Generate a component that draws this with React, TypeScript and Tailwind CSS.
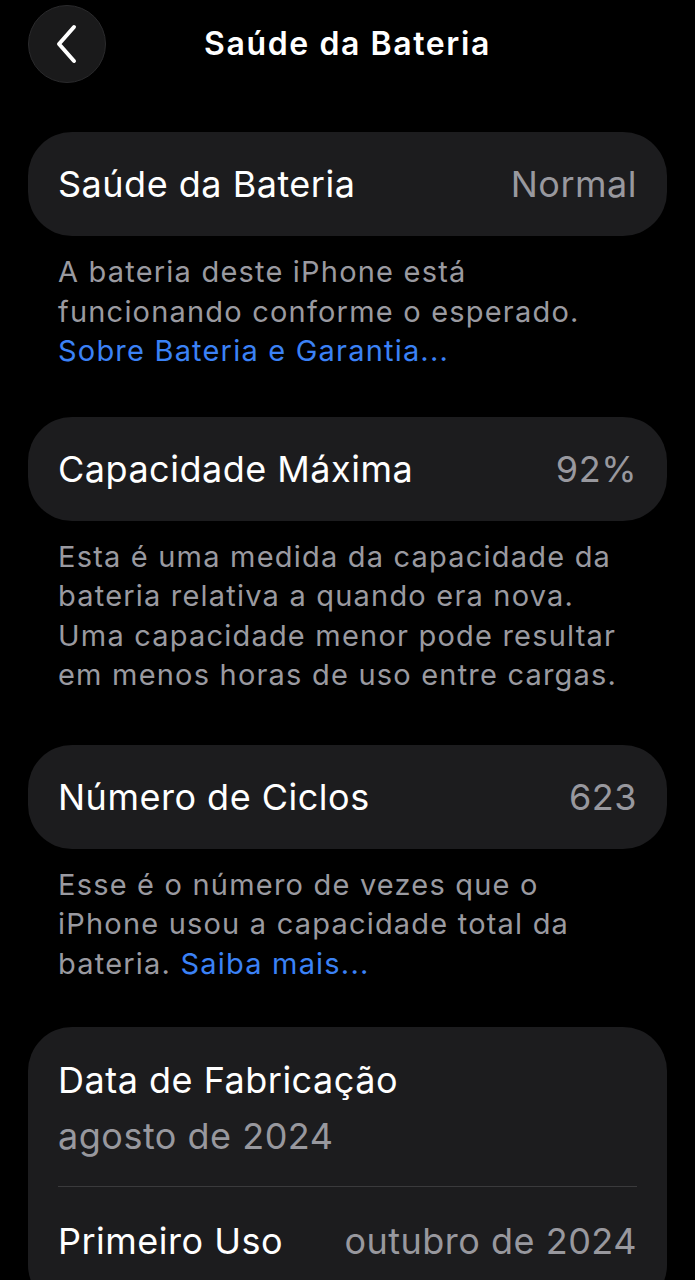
import React from 'react';

const font = { fontFamily: 'Inter, "Liberation Sans", sans-serif' };

const Row: React.FC<{ label: string; value: string }> = ({ label, value }) => (
  <div className="h-[104px] rounded-[44px] bg-[#1c1c1e] px-[30px] flex items-center justify-between">
    <span className="text-[36px] text-white tracking-[0.5px]">{label}</span>
    <span className="text-[36px] text-[#98989e] tracking-[0.5px]">{value}</span>
  </div>
);

const Note: React.FC<{ children: React.ReactNode }> = ({ children }) => (
  <p className="mt-[16px] px-[30px] text-[29px] leading-[39.5px] tracking-[1.2px] text-[#9a9aa0]">{children}</p>
);

const App: React.FC = () => {
  return (
    <div className="min-h-screen h-[1280px] overflow-hidden bg-black" style={font}>
      <header className="relative h-[88px] flex items-center justify-center">
        <button className="absolute left-[28px] top-[5px] w-[78px] h-[78px] rounded-full bg-[#1a1a1b] border border-[#2a2a2c] flex items-center justify-center">
          <svg width="30" height="40" viewBox="0 0 30 40" fill="none">
            <path d="M22 3 L7 20 L22 37" stroke="white" strokeWidth="4" strokeLinecap="round" strokeLinejoin="round" />
          </svg>
        </button>
        <h1 className="text-[32px] font-semibold text-white tracking-[1.6px]">Saúde da Bateria</h1>
      </header>

      <main className="px-[28px] pt-[44px]">
        <Row label="Saúde da Bateria" value="Normal" />
        <Note>
          A bateria deste iPhone está funcionando conforme o esperado.{' '}
          <span className="text-[#3b82f6]">Sobre Bateria e Garantia...</span>
        </Note>

        <div className="mt-[46px]">
          <Row label="Capacidade Máxima" value="92%" />
        </div>
        <Note>
          Esta é uma medida da capacidade da bateria relativa a quando era nova. Uma capacidade menor pode resultar em menos horas de uso entre cargas.
        </Note>

        <div className="mt-[50px]">
          <Row label="Número de Ciclos" value="623" />
        </div>
        <Note>
          Esse é o número de vezes que o iPhone usou a capacidade total da bateria.{' '}
          <span className="text-[#3b82f6]">Saiba mais...</span>
        </Note>

        <div className="mt-[44px] rounded-[44px] bg-[#1c1c1e] px-[30px] pt-[25px] pb-[40px]">
          <div className="text-[36px] leading-[56px] text-white tracking-[0.5px]">Data de Fabricação</div>
          <div className="text-[36px] leading-[56px] text-[#98989e] tracking-[0.5px]">agosto de 2024</div>
          <div className="mt-[22px] h-px bg-[#3a3a3c]" />
          <div className="mt-[26px] flex items-center justify-between h-[56px]">
            <span className="text-[36px] text-white tracking-[0.5px]">Primeiro Uso</span>
            <span className="text-[36px] text-[#98989e] tracking-[0.5px]">outubro de 2024</span>
          </div>
        </div>
      </main>
    </div>
  );
};

export default App;
